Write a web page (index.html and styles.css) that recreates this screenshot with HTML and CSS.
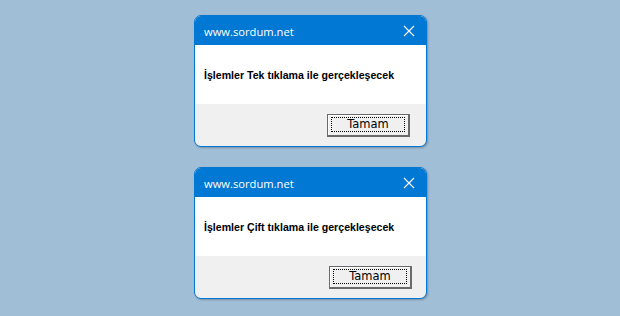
FILE: index.html
```html
<!DOCTYPE html>
<html>
<head>
<meta charset="utf-8">
<link rel="stylesheet" href="styles.css">
</head>
<body>
<div class="stack">
  <div class="dialog">
    <div class="titlebar">
      <span class="title">www.sordum.net</span>
      <svg class="close" width="12" height="12" viewBox="0 0 12 12"><path d="M1 1L11 11M11 1L1 11" stroke="#fff" stroke-width="1.1" fill="none"/></svg>
    </div>
    <div class="content">İşlemler Tek tıklama ile gerçekleşecek</div>
    <div class="footer">
      <button class="btn"><span class="focus">Tamam</span></button>
    </div>
  </div>
  <div class="dialog">
    <div class="titlebar">
      <span class="title">www.sordum.net</span>
      <svg class="close" width="12" height="12" viewBox="0 0 12 12"><path d="M1 1L11 11M11 1L1 11" stroke="#fff" stroke-width="1.1" fill="none"/></svg>
    </div>
    <div class="content">İşlemler Çift tıklama ile gerçekleşecek</div>
    <div class="footer">
      <button class="btn alt"><span class="focus">Tamam</span></button>
    </div>
  </div>
</div>
</body>
</html>
```
FILE: styles.css
```css
html, body {
  margin: 0;
  padding: 0;
  background: #a1bed7;
  width: 620px;
  height: 316px;
  overflow: hidden;
}
.stack {
  display: flex;
  flex-direction: column;
  align-items: center;
  gap: 20px;
  padding-top: 15px;
  padding-left: 1px;
}
.dialog {
  width: 231px;
  height: 130px;
  border: 1px solid #0078d4;
  border-radius: 7px;
  overflow: hidden;
  display: flex;
  flex-direction: column;
  box-shadow: 1px 1px 2px rgba(0,0,0,0.25);
  background: #f0f0f0;
}
.titlebar {
  height: 29px;
  background: #0078d4;
  display: flex;
  align-items: center;
  justify-content: space-between;
  padding: 0 11px 0 9px;
  flex-shrink: 0;
}
.title {
  color: #fff;
  font-family: "Open Sans", "Noto Sans", sans-serif;
  font-size: 11.2px;
  margin-top: 1px;
}
.close {
  display: block;
}
.content {
  height: 59px;
  background: #fff;
  display: flex;
  align-items: center;
  padding-left: 9px;
  font-family: "Liberation Sans", Arial, sans-serif;
  font-weight: bold;
  font-size: 10.6px;
  color: #000;
  flex-shrink: 0;
}
.footer {
  flex: 1;
  display: flex;
  justify-content: flex-end;
  align-items: flex-start;
  padding: 10px 16px 0 0;
}
.footer .alt {
  margin-right: -2px;
}
.btn {
  width: 83px;
  height: 23px;
  margin: 0;
  padding: 2px 3px 3px 3px;
  box-sizing: border-box;
  background: #f0f0f0;
  border: 1px solid #6a6a6a;
  border-right-width: 2px;
  border-bottom-width: 2px;
  box-shadow: inset 1px 1px 0 #fff;
  display: flex;
  font-family: "DejaVu Sans", sans-serif;
  font-size: 11.5px;
  color: #000;
}
.focus {
  flex: 1;
  border: 1px dotted #000;
  display: flex;
  align-items: center;
  justify-content: center;
  line-height: 1;
}
```
